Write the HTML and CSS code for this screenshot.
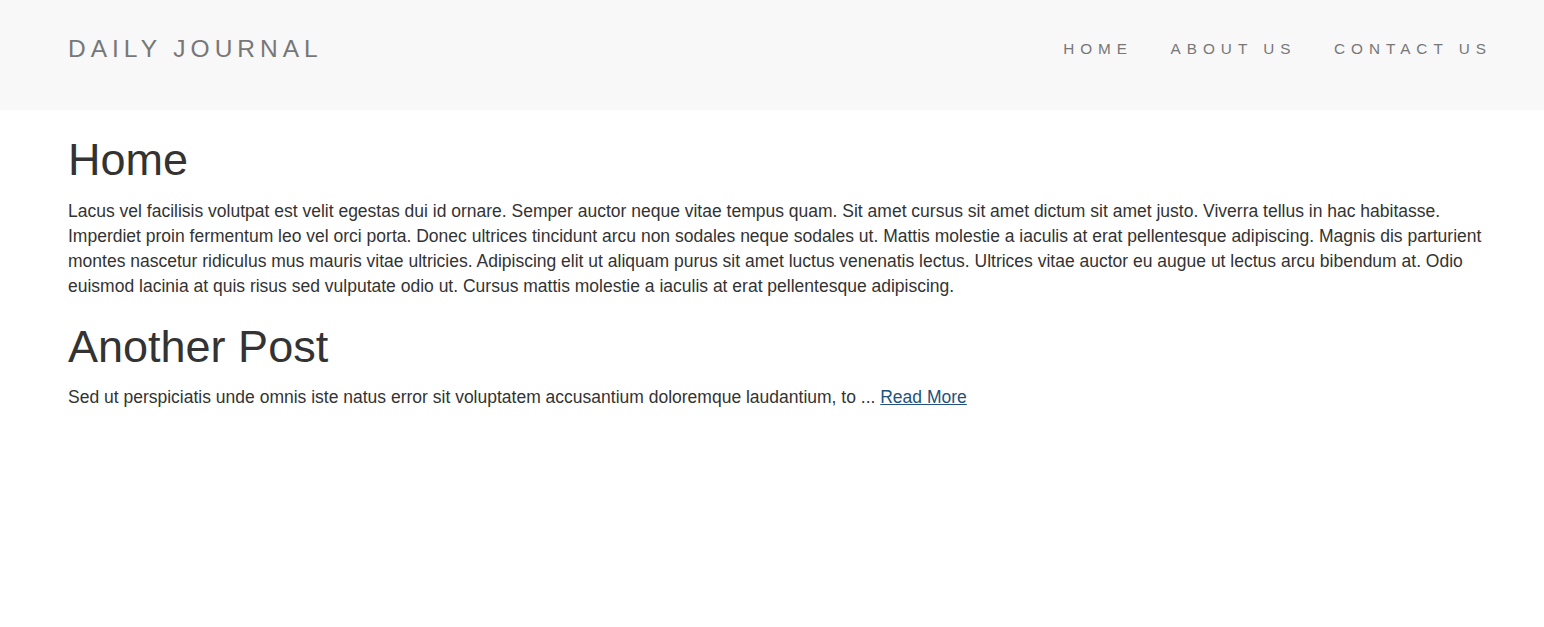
FILE: index.html
```html
<!DOCTYPE html>
<html lang="en">
<head>
<meta charset="utf-8">
<title>Daily Journal</title>
<link rel="stylesheet" href="styles.css">
</head>
<body>
<nav class="navbar">
  <a class="brand" href="#">DAILY JOURNAL</a>
  <ul class="nav-links">
    <li><a href="#">HOME</a></li>
    <li><a href="#">ABOUT US</a></li>
    <li><a href="#">CONTACT US</a></li>
  </ul>
</nav>
<main class="content">
  <section class="post">
    <h1>Home</h1>
    <p>Lacus vel facilisis volutpat est velit egestas dui id ornare. Semper auctor neque vitae tempus quam. Sit amet cursus sit amet dictum sit amet justo. Viverra tellus in hac habitasse. Imperdiet proin fermentum leo vel orci porta. Donec ultrices tincidunt arcu non sodales neque sodales ut. Mattis molestie a iaculis at erat pellentesque adipiscing. Magnis dis parturient montes nascetur ridiculus mus mauris vitae ultricies. Adipiscing elit ut aliquam purus sit amet luctus venenatis lectus. Ultrices vitae auctor eu augue ut lectus arcu bibendum at. Odio euismod lacinia at quis risus sed vulputate odio ut. Cursus mattis molestie a iaculis at erat pellentesque adipiscing.</p>
  </section>
  <section class="post">
    <h1>Another Post</h1>
    <p>Sed ut perspiciatis unde omnis iste natus error sit voluptatem accusantium doloremque laudantium, to ... <a class="read-more" href="#">Read More</a></p>
  </section>
</main>
</body>
</html>
```
FILE: styles.css
```css
html, body {
  margin: 0;
  padding: 0;
}
body {
  font-family: "Liberation Sans", Arial, sans-serif;
  font-size: 17.5px;
  line-height: 25px;
  color: #333;
  background: #fff;
}
.navbar {
  height: 110px;
  background: #f8f8f8;
  display: flex;
  align-items: center;
  justify-content: space-between;
  padding: 0 52px 0 68px;
  box-sizing: border-box;
}
.brand {
  font-size: 24.5px;
  letter-spacing: 5px;
  color: #777;
  text-decoration: none;
  margin-top: -14px;
}
.nav-links {
  list-style: none;
  margin: -14px 0 0 0;
  padding: 0;
  display: flex;
  gap: 37.5px;
}
.nav-links a {
  font-size: 15.3px;
  letter-spacing: 6px;
  color: #777;
  text-decoration: none;
}
.content {
  padding: 0 49px 0 68px;
}
.post h1 {
  font-size: 45px;
  font-weight: 400;
  line-height: 1.1;
  margin: 23px 0 14px;
  color: #333;
}
.post:first-child h1 {
  margin-top: 25px;
}
.post p {
  margin: 0;
}
.read-more {
  color: #23527c;
  text-decoration: underline;
}
```
